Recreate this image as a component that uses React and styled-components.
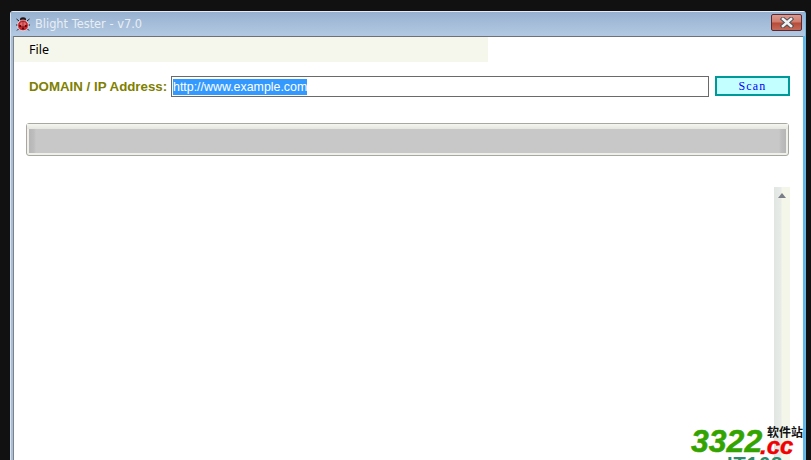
import React from "react";
import styled, { createGlobalStyle } from "styled-components";

const Global = createGlobalStyle`
  html, body { margin: 0; padding: 0; width: 811px; height: 460px; overflow: hidden; background: #111111; }
  #root { width: 811px; height: 460px; }
`;

const Desktop = styled.div`
  position: relative;
  width: 811px;
  height: 460px;
  overflow: hidden;
  box-sizing: border-box;
  padding: 11px 5px 0 10px;
  background: #111111;
`;

const Frame = styled.div`
  display: flex;
  flex-direction: column;
  height: 449px;
  box-sizing: border-box;
  border-left: 1px solid #d8e4f0;
  border-top: 1px solid #e4ecf4;
  border-right: 1px solid #6fb6e0;
  border-radius: 3px 3px 0 0;
  background: #a9bfd8;
  box-shadow: inset -2px 0 0 #5cb8ea;
`;

const TitleBar = styled.div`
  display: flex;
  align-items: center;
  height: 24px;
  flex: none;
  padding: 0 3px 0 4px;
  gap: 4px;
  background: linear-gradient(to bottom, #96b1cf 0%, #a4bcd8 45%, #b3c9e3 100%);
`;

const TitleText = styled.span`
  flex: 1;
  font: 11.4px "DejaVu Sans", sans-serif;
  color: #e8eef4;
`;

const CloseButton = styled.div`
  display: flex;
  align-items: center;
  justify-content: center;
  width: 31px;
  height: 17px;
  margin: -3px 0 0;
  box-sizing: border-box;
  border: 1px solid #5a2a32;
  border-radius: 2px;
  background: linear-gradient(to bottom, #dc9a8e 0%, #cf7c6c 48%, #b84a38 52%, #c46a58 100%);
`;

const Client = styled.div`
  position: relative;
  flex: 1;
  display: flex;
  flex-direction: column;
  margin: 0 2px 0 2px;
  background: #ffffff;
  border-top: 1px solid #6e7276;
  border-left: 1px solid #7c8288;
  min-height: 0;
`;

const MenuBar = styled.div`
  display: flex;
  align-items: center;
  flex: none;
  width: 474px;
  height: 25px;
  padding-left: 15px;
  box-sizing: border-box;
  background: #f6f7ec;
  font: 12.5px "Noto Sans", sans-serif;
  color: #000000;
`;

const AddressRow = styled.div`
  display: flex;
  align-items: center;
  flex: none;
  margin-top: 14px;
  padding-left: 15px;
  height: 21px;
`;

const Label = styled.span`
  width: 142px;
  flex: none;
  font: bold 13.3px "Liberation Sans", Arial, sans-serif;
  color: #808000;
`;

const AddressBox = styled.div`
  display: flex;
  align-items: center;
  width: 538px;
  height: 21px;
  box-sizing: border-box;
  flex: none;
  padding-left: 1px;
  border: 1px solid #6a6a6a;
  font: 12.4px "Liberation Sans", Arial, sans-serif;
`;

const Selected = styled.span`
  background: #3399ff;
  color: #ffffff;
  line-height: 16px;
`;

const ScanButton = styled.div`
  display: flex;
  align-items: center;
  justify-content: center;
  flex: none;
  width: 75px;
  height: 20px;
  margin: -1px 0 0 6px;
  box-sizing: border-box;
  border: 2px solid #009999;
  background: #c4ffff;
  color: #0000ff;
  font: 12px "Liberation Serif", serif;
  letter-spacing: 1.2px;
`;

const ProgressTrack = styled.div`
  flex: none;
  width: 763px;
  height: 33px;
  margin: 26px 0 0 12px;
  box-sizing: border-box;
  display: flex;
  flex-direction: column;
  border: 1px solid #a8a8a0;
  border-radius: 3px;
  background: #f0f0ea;
`;

const ProgressTop = styled.div`
  height: 5px;
  flex: none;
  background: linear-gradient(to bottom, #f6f6f0, #e6e6e0);
`;

const ProgressFill = styled.div`
  flex: 1;
  margin: 0 0 2px;
  border-left: 2px solid #f0f0ea;
  border-right: 2px solid #f0f0ea;
  background: linear-gradient(to right, #b6b6b6 0, #bebebe 5px, #c8c8c8 7px, #c8c8c8 calc(100% - 7px), #bebebe calc(100% - 5px), #b6b6b6 100%);
`;

const Output = styled.div`
  flex: 1;
  display: flex;
  justify-content: flex-end;
  padding: 31px 13px 0 0;
  min-height: 0;
`;

const ScrollBar = styled.div`
  width: 16px;
  display: flex;
  justify-content: center;
  padding-top: 6px;
  box-sizing: border-box;
  background: linear-gradient(to right, #e2e6e2 0, #e8ece8 7px, #f5f6ea 8px, #f5f6ea 100%);
`;

const Watermark = styled.div`
  position: absolute;
  left: 690px;
  top: 424px;
  width: 121px;
  height: 36px;
  overflow: hidden;
`;

const Digits = styled.span`
  position: absolute;
  left: 1px;
  top: 0;
  font: italic bold 32px/34px "Liberation Sans", Arial, sans-serif;
  -webkit-text-stroke: 0.5px #33a300;
  color: #33a300;
`;

const Domain = styled.span`
  position: absolute;
  left: 70px;
  top: 14px;
  font: italic bold 24px/16px "Liberation Sans", Arial, sans-serif;
  -webkit-text-stroke: 0.4px #f00000;
  color: #f00000;
`;

const Cjk = styled.span`
  position: absolute;
  left: 77px;
  top: 1px;
  font: bold 12px/13px "Noto Sans CJK SC", sans-serif;
  color: #111111;
`;

const Clipped = styled.span`
  position: absolute;
  left: 37px;
  top: 30px;
  font: bold 20px/20px "Liberation Sans", Arial, sans-serif;
  letter-spacing: 1px;
  color: #2f8a6a;
`;

const Ladybug = () => (
  <svg width="16" height="16" viewBox="0 0 16 16">
    <g stroke="#1c1c1c" strokeWidth="1" fill="none">
      <path d="M4 5L1.5 3M12 5l2.5-2M3 9H1M13 9h2M4 12.5l-2 2M12 12.5l2 2" />
    </g>
    <ellipse cx="8" cy="3.6" rx="3" ry="2.4" fill="#241214" />
    <ellipse cx="8" cy="9.4" rx="5.4" ry="5.4" fill="#c8242c" stroke="#ffffff" strokeWidth="0.6" />
    <ellipse cx="8" cy="8" rx="3" ry="2" fill="#e86a6a" />
    <path d="M8 5v9" stroke="#6a1218" strokeWidth="0.6" />
    <circle cx="5.2" cy="10" r="1.1" fill="#3a0c10" />
    <circle cx="10.8" cy="10" r="1.1" fill="#3a0c10" />
    <circle cx="8" cy="12.4" r="0.9" fill="#3a0c10" />
  </svg>
);

const CloseIcon = () => (
  <svg width="14" height="11" viewBox="0 0 14 11">
    <path d="M3 2L11 9M11 2L3 9" stroke="#4a5058" strokeWidth="4.4" strokeLinecap="square" />
    <path d="M3 2L11 9M11 2L3 9" stroke="#f0f2f4" strokeWidth="2.6" strokeLinecap="square" />
  </svg>
);

const ScrollUp = () => (
  <svg width="8" height="5" viewBox="0 0 8 5">
    <path d="M4 0L8 5H0Z" fill="#7a7e86" />
  </svg>
);

export default function App() {
  return (
    <>
      <Global />
      <Desktop>
        <Frame>
          <TitleBar>
            <Ladybug />
            <TitleText>Blight Tester - v7.0</TitleText>
            <CloseButton>
              <CloseIcon />
            </CloseButton>
          </TitleBar>
          <Client>
            <MenuBar>File</MenuBar>
            <AddressRow>
              <Label>DOMAIN / IP Address:</Label>
              <AddressBox>
                <Selected>http://www.example.com</Selected>
              </AddressBox>
              <ScanButton>Scan</ScanButton>
            </AddressRow>
            <ProgressTrack>
              <ProgressTop />
              <ProgressFill />
            </ProgressTrack>
            <Output>
              <ScrollBar>
                <ScrollUp />
              </ScrollBar>
            </Output>
          </Client>
        </Frame>
        <Watermark>
          <Digits>3322</Digits>
          <Domain>.cc</Domain>
          <Cjk>软件站</Cjk>
          <Clipped>IT168</Clipped>
        </Watermark>
      </Desktop>
    </>
  );
}
